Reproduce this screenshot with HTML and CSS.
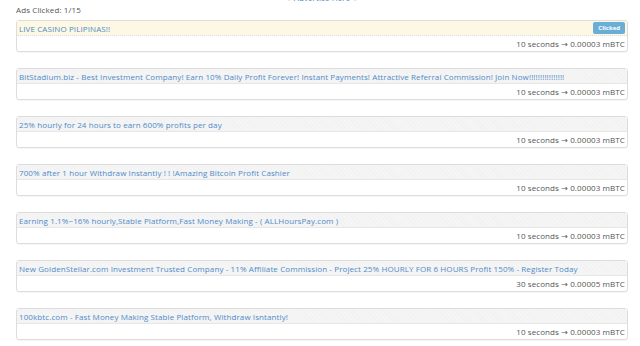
FILE: index.html
```html
<!DOCTYPE html>
<html lang="en">
<head>
    <meta charset="UTF-8">
    <title>View Ads</title>
    <link rel="stylesheet" href="styles.css">
</head>
<body>
    <div class="page">
        <div class="advertise"><a href="#">&raquo; Advertise Here &laquo;</a></div>
        <div class="counter">Ads Clicked: 1/15</div>

        <!-- Ads list -->
        <div class="ad ad-done">
            <div class="ad-head">
                <a href="#">LIVE CASINO PILIPINAS!!</a>
                <span class="badge">Clicked</span>
            </div>
            <div class="ad-body">10 seconds &rarr; 0.00003 mBTC</div>
        </div>

        <div class="ad">
            <div class="ad-head"><a href="#">BitStadium.biz - Best Investment Company! Earn 10% Daily Profit Forever! Instant Payments! Attractive Referral Commission! Join Now!!!!!!!!!!!!!!!!</a></div>
            <div class="ad-body">10 seconds &rarr; 0.00003 mBTC</div>
        </div>

        <div class="ad">
            <div class="ad-head"><a href="#">25% hourly for 24 hours to earn 600% profits per day</a></div>
            <div class="ad-body">10 seconds &rarr; 0.00003 mBTC</div>
        </div>

        <div class="ad">
            <div class="ad-head"><a href="#">700% after 1 hour Withdraw Instantly ! ! !Amazing Bitcoin Profit Cashier</a></div>
            <div class="ad-body">10 seconds &rarr; 0.00003 mBTC</div>
        </div>

        <div class="ad">
            <div class="ad-head"><a href="#">Earning 1.1%~16% hourly,Stable Platform,Fast Money Making - ( ALLHoursPay.com )</a></div>
            <div class="ad-body">10 seconds &rarr; 0.00003 mBTC</div>
        </div>

        <div class="ad">
            <div class="ad-head"><a href="#">New GoldenStellar.com Investment Trusted Company - 11% Affiliate Commission - Project 25% HOURLY FOR 6 HOURS Profit 150% - Register Today</a></div>
            <div class="ad-body">30 seconds &rarr; 0.00005 mBTC</div>
        </div>

        <div class="ad">
            <div class="ad-head"><a href="#">100kbtc.com - Fast Money Making Stable Platform, Withdraw Isntantly!</a></div>
            <div class="ad-body">10 seconds &rarr; 0.00003 mBTC</div>
        </div>
    </div>
</body>
</html>
```

FILE: styles.css
```css
/* Basic styling */
body {
    margin: 0;
    background: #fff;
    font-family: 'Open Sans', 'DejaVu Sans', sans-serif;
    font-size: 8px;
    letter-spacing: 0.1px;
    color: #555;
}

a {
    color: #4f8bc9;
    text-decoration: none;
}

.page {
    margin: -8px 12px 0 16px;
}

.advertise {
    text-align: center;
    height: 12px;
    line-height: 12px;
}

.counter {
    line-height: 12px;
}

.ad {
    border: 1px solid #ddd;
    border-radius: 3px;
    margin: 4px 0 16px;
    box-shadow: 0 1px 1px rgba(0,0,0,0.04);
}

.ad + .ad {
    margin-top: 0;
}

.ad-head {
    display: flex;
    align-items: center;
    justify-content: space-between;
    height: 14px;
    padding: 0 2px;
    border-bottom: 1px solid #e6e6e6;
    background: #f5f5f5 repeating-linear-gradient(45deg, rgba(0,0,0,0.015) 0 1px, transparent 1px 3px);
    white-space: nowrap;
    overflow: hidden;
}

.ad-done .ad-head {
    background: #fcf8e3;
    border-bottom: 1px dotted #ddd;
}

.ad-body {
    height: 15px;
    line-height: 15px;
    text-align: right;
    padding: 0 2px;
}

.badge {
    background: #6aaed6;
    color: #fff;
    font-size: 6px;
    font-weight: bold;
    letter-spacing: 0;
    padding: 2px 5px;
    border-radius: 2px;
}
```
